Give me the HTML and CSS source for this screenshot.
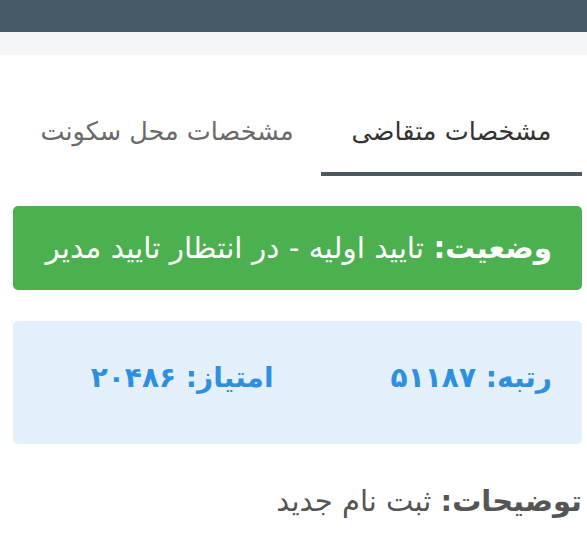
FILE: index.html
```html
<!DOCTYPE html>
<html lang="fa" dir="rtl">
<head>
<meta charset="utf-8">
<link rel="stylesheet" href="styles.css">
</head>
<body>
<div class="topbar"></div>
<div class="subbar"></div>
<main class="content">
  <nav class="tabs">
    <div class="tab tab-active">مشخصات متقاضی</div>
    <div class="tab tab-rest">مشخصات محل سکونت</div>
  </nav>
  <div class="status"><span><b>وضعیت:</b> تایید اولیه - در انتظار تایید مدیر</span></div>
  <div class="scores">
    <div class="score score-rank"><b>رتبه: ۵۱۱۸۷</b></div>
    <div class="score score-points"><b>امتیاز: ۲۰۴۸۶</b></div>
  </div>
  <p class="desc"><b>توضیحات:</b> ثبت نام جدید</p>
</main>
</body>
</html>
```
FILE: styles.css
```css
html, body {
  margin: 0;
  padding: 0;
  background: #ffffff;
}
body {
  font-family: "DejaVu Sans", sans-serif;
  direction: rtl;
}
.topbar {
  height: 32px;
  background: #465a67;
}
.subbar {
  height: 23px;
  background: #f5f6f8;
}
.content {
  margin: 0 5px 0 13px;
}
.tabs {
  display: flex;
  margin-top: 54px;
}
.tab {
  height: 67px;
  line-height: 44px;
  padding-bottom: 19px;
  text-align: center;
  font-size: 25.5px;
  box-sizing: border-box;
}
.tab-active {
  width: 261px;
  color: #333333;
  border-bottom: 4px solid #4d5a5f;
}
.tab-rest {
  flex: 1;
  color: #6a6a6a;
}
.status {
  margin-top: 30px;
  height: 84px;
  box-sizing: border-box;
  background: #4caf50;
  border-radius: 5px;
  color: #ffffff;
  font-size: 29.5px;
  padding: 0 30px;
  display: flex;
  align-items: center;
}
.scores {
  margin-top: 31px;
  height: 123px;
  box-sizing: border-box;
  padding-bottom: 11px;
  background: #e3f0fc;
  border-radius: 5px;
  display: grid;
  grid-template-columns: 1fr 1fr;
  align-items: center;
}
.score {
  color: #2e8fdf;
  font-size: 28px;
}
.score b {
  letter-spacing: 0.5px;
}
.score-rank {
  padding-right: 30px;
}
.score-points {
  padding-right: 24px;
}
.desc {
  margin: 40px 0 0 0;
  color: #555555;
  font-size: 29px;
}
```
